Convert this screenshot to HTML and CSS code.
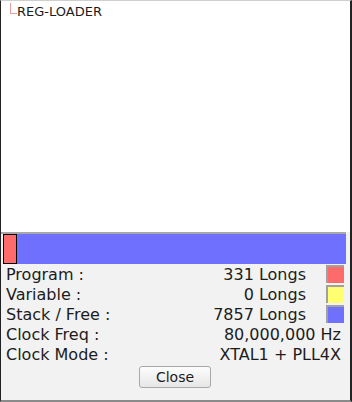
FILE: index.html
```html
<!DOCTYPE html>
<html lang="en">
<head>
    <meta charset="UTF-8">
    <title>Memory Usage</title>
    <link rel="stylesheet" href="styles.css">
</head>
<body>
<div class="window">
    <div class="tree">
        <div class="tree-item">
            <span class="branch"></span><span class="name">REG-LOADER</span>
        </div>
    </div>

    <div class="usage">
        <div class="bar">
            <div class="seg program" style="width: 14px"></div>
        </div>
    </div>

    <div class="info">
        <div class="row">
            <span class="label">Program :</span>
            <span class="value">331 Longs</span>
            <span class="swatch program"></span>
        </div>
        <div class="row">
            <span class="label">Variable :</span>
            <span class="value">0 Longs</span>
            <span class="swatch variable"></span>
        </div>
        <div class="row">
            <span class="label">Stack / Free :</span>
            <span class="value">7857 Longs</span>
            <span class="swatch stack"></span>
        </div>
        <div class="row">
            <span class="label">Clock Freq :</span>
            <span class="value wide">80,000,000 Hz</span>
        </div>
        <div class="row">
            <span class="label">Clock Mode :</span>
            <span class="value wide">XTAL1 + PLL4X</span>
        </div>
        <button class="close">Close</button>
    </div>
</div>
</body>
</html>
```

FILE: styles.css
```css
body {
    margin: 0;
    font-family: "DejaVu Sans", sans-serif;
    color: #1c1c1c;
}

.window {
    width: 352px;
    height: 402px;
    box-sizing: border-box;
    border-top: 1px solid #cfcfcf;
    border-left: 1px solid #222;
    border-right: 2px solid #222;
    border-bottom: 2px solid #8a8a8a;
    background-color: #f2f2f2;
    display: flex;
    flex-direction: column;
}

.tree {
    height: 231px;
    background-color: #fff;
    padding-top: 2px;
    box-sizing: border-box;
}

.tree-item {
    display: flex;
    align-items: flex-start;
    font-size: 13px;
    line-height: 18px;
}

.branch {
    width: 6px;
    height: 10px;
    margin-left: 9px;
    border-left: 1px solid #e4a0a0;
    border-bottom: 1px solid #e4a0a0;
}

.usage {
    border-top: 2px solid #a8a8a8;
    margin-right: 4px;
    padding-left: 2px;
}

.bar {
    height: 30px;
    background-color: #7070ff;
    display: flex;
}

.seg {
    height: 30px;
    box-sizing: border-box;
    border: 1px solid #000;
}

.seg.program {
    background-color: #ff6a6a;
}

.info {
    flex: 1;
    padding: 1px 6px 0 5px;
    display: flex;
    flex-direction: column;
    font-size: 16px;
}

.row {
    display: flex;
    height: 20px;
    line-height: 20px;
}

.label {
    flex: 1;
}

.value {
    margin-right: 20px;
}

.value.wide {
    margin-right: 3px;
}

.swatch {
    width: 18px;
    height: 18px;
    box-sizing: border-box;
    border-top: 2px solid #a0a0a0;
    border-left: 2px solid #a0a0a0;
}

.swatch.program {
    background-color: #ff6a6a;
}

.swatch.variable {
    background-color: #ffff70;
}

.swatch.stack {
    background-color: #7070ff;
}

.close {
    align-self: center;
    margin-top: 1px;
    width: 72px;
    height: 22px;
    padding: 0;
    font-family: "DejaVu Sans", sans-serif;
    font-size: 14px;
    color: #1c1c1c;
    border: 1px solid #a8a8a8;
    border-radius: 3px;
    background: linear-gradient(#fdfdfd, #e6e6e6);
}
```
